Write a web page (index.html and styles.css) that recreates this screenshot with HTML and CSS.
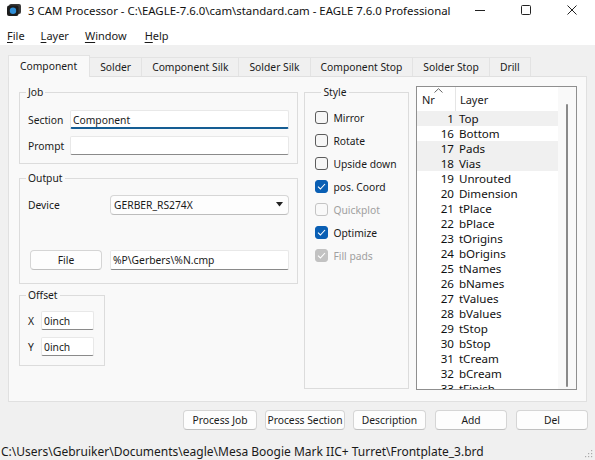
FILE: index.html
```html
<!DOCTYPE html>
<html>
<head>
<meta charset="utf-8">
<link rel="stylesheet" href="styles.css">
</head>
<body>
<div class="window">
  <div class="titlebar">
    <svg class="appicon" width="14" height="12" viewBox="0 0 14 12">
      <rect x="2" y="0" width="12" height="10" rx="2" fill="#3a3a3a"/>
      <rect x="0" y="1.5" width="11.5" height="10.5" rx="2" fill="#1d1d1d"/>
      <circle cx="6" cy="6.8" r="3.2" fill="#2f8fd8"/>
    </svg>
    <span class="title">3 CAM Processor - C:\EAGLE-7.6.0\cam\standard.cam - EAGLE 7.6.0 Professional</span>
    <div class="controls">
      <span class="ctl"><svg width="10" height="10" viewBox="0 0 10 10"><line x1="0" y1="5.5" x2="10" y2="5.5" stroke="#222" stroke-width="1"/></svg></span>
      <span class="ctl"><svg width="10" height="10" viewBox="0 0 10 10"><rect x="0.5" y="0.5" width="9" height="9" rx="1" fill="none" stroke="#222" stroke-width="1"/></svg></span>
      <span class="ctl"><svg width="10" height="10" viewBox="0 0 10 10"><path d="M0.5 0.5 L9.5 9.5 M9.5 0.5 L0.5 9.5" stroke="#222" stroke-width="1"/></svg></span>
    </div>
  </div>
  <div class="menubar">
    <span class="menu m-file"><u>F</u>ile</span>
    <span class="menu"><u>L</u>ayer</span>
    <span class="menu"><u>W</u>indow</span>
    <span class="menu m-help"><u>H</u>elp</span>
  </div>
  <div class="client">
    <div class="tabs">
      <span class="tab active">Component</span>
      <span class="tab">Solder</span>
      <span class="tab">Component Silk</span>
      <span class="tab">Solder Silk</span>
      <span class="tab">Component Stop</span>
      <span class="tab">Solder Stop</span>
      <span class="tab">Drill</span>
    </div>
    <div class="pane">
      <div class="leftcol">
        <fieldset class="group job">
          <legend>Job</legend>
          <div class="row">
            <span class="lbl">Section</span>
            <span class="edit focus">Component</span>
          </div>
          <div class="row">
            <span class="lbl">Prompt</span>
            <span class="edit"></span>
          </div>
        </fieldset>
        <fieldset class="group output">
          <legend>Output</legend>
          <div class="row">
            <span class="lbl wide">Device</span>
            <span class="combo">GERBER_RS274X<svg class="arrow" width="7" height="5" viewBox="0 0 7 5"><path d="M0 0 L7 0 L3.5 4.5 Z" fill="#222"/></svg></span>
          </div>
          <div class="row filerow">
            <span class="btn filebtn">File</span>
            <span class="edit">%P\Gerbers\%N.cmp</span>
          </div>
        </fieldset>
        <fieldset class="group offset">
          <legend>Offset</legend>
          <div class="row">
            <span class="lbl small">X</span>
            <span class="edit short">0inch</span>
          </div>
          <div class="row">
            <span class="lbl small">Y</span>
            <span class="edit short">0inch</span>
          </div>
        </fieldset>
      </div>
      <fieldset class="group style">
        <legend>Style</legend>
        <div class="chk"><span class="box"></span>Mirror</div>
        <div class="chk"><span class="box"></span>Rotate</div>
        <div class="chk"><span class="box"></span>Upside down</div>
        <div class="chk"><span class="box on"><svg width="9" height="7" viewBox="0 0 9 7"><path d="M1 3.6 L3.4 6 L8 1" fill="none" stroke="#fff" stroke-width="1.1"/></svg></span>pos. Coord</div>
        <div class="chk disabled"><span class="box"></span>Quickplot</div>
        <div class="chk"><span class="box on"><svg width="9" height="7" viewBox="0 0 9 7"><path d="M1 3.6 L3.4 6 L8 1" fill="none" stroke="#fff" stroke-width="1.1"/></svg></span>Optimize</div>
        <div class="chk disabled"><span class="box on"><svg width="9" height="7" viewBox="0 0 9 7"><path d="M1 3.6 L3.4 6 L8 1" fill="none" stroke="#fff" stroke-width="1.1"/></svg></span>Fill pads</div>
      </fieldset>
      <div class="list">
        <div class="listbody">
          <div class="lhead">
            <span class="hnr">Nr<svg class="sort" width="9" height="5" viewBox="0 0 9 5"><path d="M0.5 4.5 L4.5 0.7 L8.5 4.5" fill="none" stroke="#555" stroke-width="0.9"/></svg></span>
            <span class="hlayer">Layer</span>
          </div>
          <div class="lrow sel"><span class="nr">1</span><span class="nm">Top</span></div>
          <div class="lrow"><span class="nr">16</span><span class="nm">Bottom</span></div>
          <div class="lrow sel"><span class="nr">17</span><span class="nm">Pads</span></div>
          <div class="lrow sel"><span class="nr">18</span><span class="nm">Vias</span></div>
          <div class="lrow"><span class="nr">19</span><span class="nm">Unrouted</span></div>
          <div class="lrow"><span class="nr">20</span><span class="nm">Dimension</span></div>
          <div class="lrow"><span class="nr">21</span><span class="nm">tPlace</span></div>
          <div class="lrow"><span class="nr">22</span><span class="nm">bPlace</span></div>
          <div class="lrow"><span class="nr">23</span><span class="nm">tOrigins</span></div>
          <div class="lrow"><span class="nr">24</span><span class="nm">bOrigins</span></div>
          <div class="lrow"><span class="nr">25</span><span class="nm">tNames</span></div>
          <div class="lrow"><span class="nr">26</span><span class="nm">bNames</span></div>
          <div class="lrow"><span class="nr">27</span><span class="nm">tValues</span></div>
          <div class="lrow"><span class="nr">28</span><span class="nm">bValues</span></div>
          <div class="lrow"><span class="nr">29</span><span class="nm">tStop</span></div>
          <div class="lrow"><span class="nr">30</span><span class="nm">bStop</span></div>
          <div class="lrow"><span class="nr">31</span><span class="nm">tCream</span></div>
          <div class="lrow"><span class="nr">32</span><span class="nm">bCream</span></div>
          <div class="lrow"><span class="nr">33</span><span class="nm">tFinish</span></div>
        </div>
        <div class="vscroll"><span class="thumb"></span></div>
      </div>
    </div>
    <div class="buttons">
      <span class="btn b-job">Process Job</span>
      <span class="btn b-sec">Process Section</span>
      <span class="btn b-desc">Description</span>
      <span class="btn b-add">Add</span>
      <span class="btn b-del">Del</span>
    </div>
  </div>
  <div class="status">
    <span class="stext">C:\Users\Gebruiker\Documents\eagle\Mesa Boogie Mark IIC+ Turret\Frontplate_3.brd</span>
    <svg class="grip" width="10" height="10" viewBox="0 0 10 10">
      <rect x="8" y="2" width="1.2" height="1.2" fill="#aaa"/>
      <rect x="5" y="5" width="1.2" height="1.2" fill="#aaa"/>
      <rect x="8" y="5" width="1.2" height="1.2" fill="#aaa"/>
      <rect x="2" y="8" width="1.2" height="1.2" fill="#aaa"/>
      <rect x="5" y="8" width="1.2" height="1.2" fill="#aaa"/>
      <rect x="8" y="8" width="1.2" height="1.2" fill="#aaa"/>
    </svg>
  </div>
</div>
</body>
</html>
```
FILE: styles.css
```css
* { box-sizing: border-box; }
html, body { margin: 0; padding: 0; }
body {
  width: 595px;
  height: 460px;
  overflow: hidden;
  font-family: "Noto Sans", "DejaVu Sans", sans-serif;
  font-size: 10.3px;
  color: #1a1a1a;
  background: #f0f0f0;
}
.window { width: 595px; height: 460px; display: flex; flex-direction: column; }

/* title bar */
.titlebar {
  height: 20px;
  background: #fff;
  display: flex;
  align-items: center;
}
.appicon { flex: none; margin-left: 7px; margin-right: 7px; }
.title { font-size: 11.4px; color: #111; white-space: nowrap; }
.controls { margin-left: auto; display: flex; height: 20px; flex: none; }
.ctl { width: 46px; display: flex; align-items: center; justify-content: center; }

/* menu */
.menubar {
  height: 25px;
  background: #fff;
  display: flex;
  align-items: center;
  gap: 16px;
  padding: 5px 0 0 7px;
}
.menu { font-size: 11px; white-space: nowrap; }
.menu u { text-decoration: underline; text-underline-offset: 2px; }
.m-help { margin-left: 2px; }

/* client */
.client { flex: 1; padding: 10px 8px 0 8px; display: flex; flex-direction: column; }
.tabs { display: flex; height: 21px; align-items: flex-end; position: relative; z-index: 1; }
.tab {
  height: 19px;
  padding: 0 10px;
  border: 1px solid #e3e3e3;
  border-bottom: none;
  border-left: none;
  background: #f0f0f0;
  display: flex;
  align-items: center;
  white-space: nowrap;
  line-height: 1;
}
.tab.active {
  height: 22px;
  margin-bottom: -1px;
  border-left: 1px solid #e3e3e3;
  background: #f9f9f9;
  padding: 0 12px 0 11px;
}
.pane {
  height: 326px;
  border: 1px solid #e0e0e0;
  background: #f9f9f9;
  display: flex;
  padding: 7px 9px 0 10px;
  gap: 6px;
}
.leftcol { width: 281px; display: flex; flex-direction: column; }

fieldset.group {
  margin: 0;
  border: 1px solid #dcdcdc;
  padding: 0;
  min-width: 0;
}
fieldset.group legend {
  padding: 0 2px;
  margin-left: 6px;
  line-height: 16px;
  height: 16px;
}
.row { display: flex; align-items: center; height: 19px; }
.lbl { width: 42px; padding-left: 8px; box-sizing: content-box; white-space: nowrap; }
.lbl.wide { width: 82px; }
.lbl.small { width: 13px; }

.edit {
  flex: 1;
  height: 19px;
  background: #fff;
  border: 1px solid #e8e8e8;
  border-bottom: 1px solid #8a8a8a;
  border-radius: 2px;
  padding: 0 2px;
  display: flex;
  align-items: center;
  white-space: nowrap;
}
.edit.focus { border-bottom: 2px solid #155d93; padding-top: 1px; }
.edit.short { flex: none; width: 53px; }

.job { height: 80px; padding: 10px 8px 0 0 !important; }
.job .row + .row { margin-top: 7px; }

.output { height: 114px; margin-top: 6px !important; padding: 9px 8px 0 0 !important; }
.combo {
  flex: 1;
  height: 20px;
  background: #fdfdfd;
  border: 1px solid #d6d6d6;
  border-bottom-color: #bdbdbd;
  border-radius: 4px;
  display: flex;
  align-items: center;
  padding: 0 5px 0 3px;
  justify-content: space-between;
}
.filerow { margin-top: 36px; height: 20px; }
.filerow .edit { height: 20px; margin-left: 8px; }
.filebtn { width: 72px; height: 20px; margin-left: 10px; }

.offset { width: 86px; height: 79px; margin-top: 3px !important; padding: 8px 0 0 0 !important; }
.offset .row + .row { margin-top: 7px; }

.style { width: 105px; height: 305px; padding: 6px 0 0 10px !important; }
.chk { height: 23px; display: flex; align-items: center; white-space: nowrap; }
.box {
  width: 13px;
  height: 13px;
  border: 1px solid #5c5c5c;
  border-radius: 3px;
  background: #f6f6f6;
  margin-right: 5px;
  display: flex;
  align-items: center;
  justify-content: center;
  flex: none;
}
.box.on { background: #0a5fb4; border-color: #0a5fb4; }
.chk.disabled { color: #a0a0a0; }
.chk.disabled .box { border-color: #c4c4c4; background: #f9f9f9; }
.chk.disabled .box.on { background: #c2c2c2; border-color: #c2c2c2; }

/* list */
.list {
  width: 162px;
  height: 304px;
  margin-top: 2px;
  margin-left: 1px;
  border: 1px solid #8f8f8f;
  background: #fff;
  display: flex;
  overflow: hidden;
}
.listbody { width: 141px; overflow: hidden; }
.lhead { height: 24px; display: flex; align-items: center; font-size: 11px; }
.hnr { width: 39px; height: 24px; padding-left: 5px; display: flex; align-items: center; border-right: 1px solid #e5e5e5; position: relative; }
.sort { position: absolute; left: 17px; top: 1px; }
.hlayer { padding-left: 4px; }
.lrow { height: 15px; display: flex; align-items: center; line-height: 15px; font-size: 11.6px; color: #111; }
.lrow.sel { background: #f0f0f0; }
.nr { width: 37px; text-align: right; }
.nm { padding-left: 5px; }
.vscroll { flex: 1; background: #f9f9f9; display: flex; justify-content: center; padding-top: 17px; padding-bottom: 1px; }
.thumb { width: 2px; background: #8a8a8a; border-radius: 1px; height: 283px; margin-left: 1px; }

/* buttons */
.btn {
  height: 20px;
  background: #fdfdfd;
  border: 1px solid #d5d5d5;
  border-bottom-color: #c0c0c0;
  border-radius: 4px;
  display: flex;
  align-items: center;
  justify-content: center;
  white-space: nowrap;
}
.buttons { display: flex; justify-content: flex-end; gap: 8px; margin-top: 8px; margin-right: -1px; }
.b-job { width: 74px; }
.b-sec { width: 80px; }
.b-desc { width: 73px; }
.b-add { width: 72px; margin-left: 1px; }
.b-del { width: 72px; margin-left: 1px; }

/* status */
.status { height: 18px; display: flex; align-items: center; }
.stext { padding-left: 1px; white-space: nowrap; font-size: 12px; }
.grip { margin-left: auto; margin-right: 2px; margin-top: 4px; }
```
